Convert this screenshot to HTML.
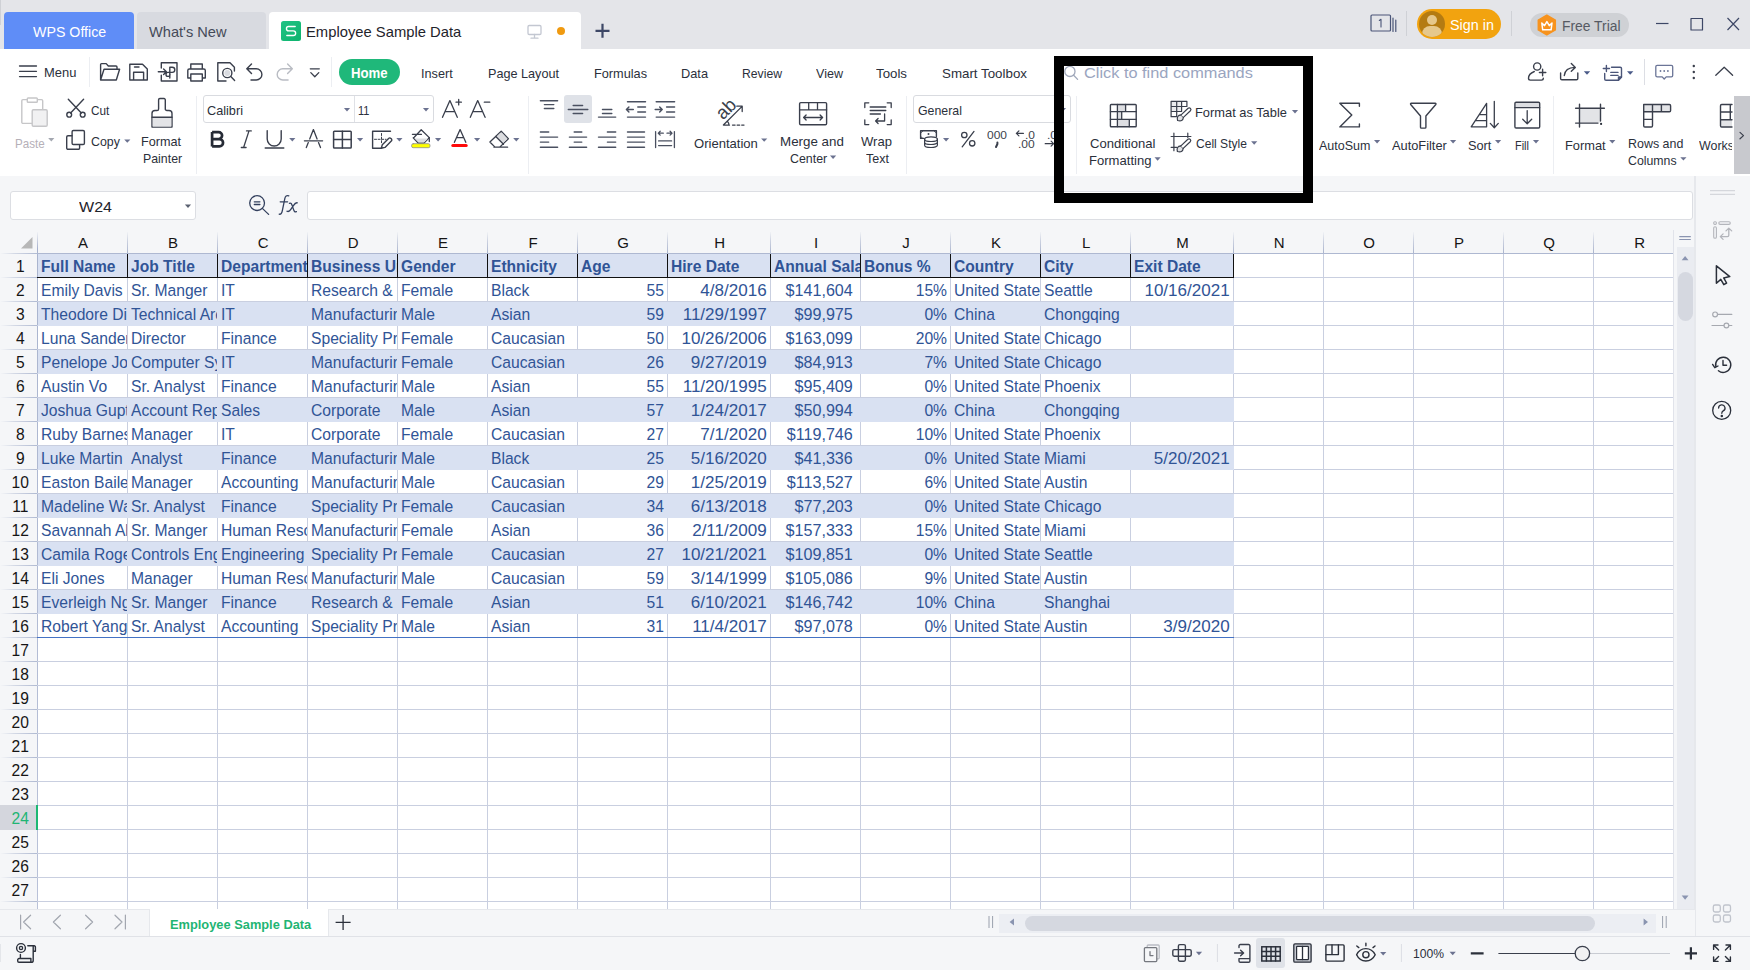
<!DOCTYPE html>
<html><head><meta charset="utf-8"><title>WPS</title>
<style>
*{box-sizing:border-box;margin:0;padding:0}
html,body{width:1750px;height:970px;overflow:hidden;background:#fff}
body{font-family:"Liberation Sans",sans-serif;color:#2b303b;font-size:13px}
#app{position:relative;width:1750px;height:970px;overflow:hidden;background:#fff}
.abs{position:absolute}
svg{position:absolute;overflow:visible}
.t{position:absolute;white-space:nowrap;line-height:1}
/* title bar */
#title{position:absolute;left:0;top:0;width:1750px;height:49px;background:#e4e5e9}
.tab{position:absolute;top:12px;height:37px;border-radius:4px 4px 0 0}
/* ribbon */
#menurow{position:absolute;left:0;top:49px;width:1750px;height:47px;background:#fff}
#ribbon{position:absolute;left:0;top:96px;width:1750px;height:80px;background:#fff}
.sep{position:absolute;width:1px;background:#eceef2}
.box{position:absolute;background:#fff;border:1px solid #d9dbe0;border-radius:3px}
.arr{position:absolute;width:0;height:0;border-left:3.5px solid transparent;border-right:3.5px solid transparent;border-top:4px solid #5a6070}
/* formula area */
#fbar{position:absolute;left:0;top:176px;width:1750px;height:77px;background:#f5f6f8}
/* grid */
#grid{position:absolute;left:0;top:0;width:1673px;height:909px;overflow:hidden;clip-path:inset(232px 0 0 0)}
.ch{position:absolute;top:233px;width:42px;height:20px;line-height:20px;text-align:center;font-size:15px;color:#151515}
.chl{position:absolute;top:231px;width:1px;height:22px;background:linear-gradient(to bottom,rgba(170,180,205,0),rgba(170,180,205,.55) 45%,#aab4cd)}
.rn{position:absolute;left:1.75px;width:37px;height:23px;line-height:25px;text-align:center;font-size:15.6px;color:#151515}
#rowhdr{position:absolute;left:0;top:232px;width:37px;height:677px;background:#f5f6f8}
.rl{position:absolute;left:0;width:37px;height:1px;background:linear-gradient(to right,rgba(176,186,210,0),rgba(176,186,210,.5) 40%,#b0bad2)}
.rn.sel{color:#1fb574;z-index:3}
.selbg{z-index:2;position:absolute;left:0;top:805px;width:36px;height:25px;background:#d4d6dd}
.vl{position:absolute;top:253px;width:1px;height:660px;background:#c9cfe0}
.vl.first{top:231px;height:680px;background:linear-gradient(to bottom,rgba(163,174,203,0),#a3aecb 18px,#a9b4ce 22px,#b9c1d8 100%)}
.hl{position:absolute;left:37px;width:1636px;height:1px;background:#c9cfe0}
.hl.first{background:#aeb8d1}
.band{position:absolute;left:38px;width:1196px;height:24px;background:#d9e1f2}
.c{position:absolute;height:23px;line-height:25px;font-size:15.65px;transform:scaleY(1.06);transform-origin:50% 60%;color:#305496;white-space:nowrap;overflow:hidden;padding-left:3px}
.c.h{font-weight:bold;font-size:15.6px}
.c.r{text-align:right;padding-left:0;padding-right:3px}
.c.sal{padding-right:7px;transform:scale(1.03,1.06);transform-origin:100% 60%}
.c.dt{transform:scale(1.09,1.06);transform-origin:100% 60%}
.hb{position:absolute;top:254px;width:1px;height:24px;background:#111}
.hbb{position:absolute;left:37px;width:1197px;height:1px;background:#111}
.tbb{position:absolute;left:37px;width:1197px;height:1px;background:#4472c4}
.selmark{z-index:3;position:absolute;left:36px;top:805px;width:2px;height:25px;background:#1cb873}
/* bottom */
#sheetbar{position:absolute;left:0;top:909px;width:1695px;height:27px;background:#f5f6f8;border-top:1px solid #e6e8ec}
#status{position:absolute;left:0;top:936px;width:1750px;height:34px;background:#f5f6f8;border-top:1px solid #e0e2e7}
#rpanel{position:absolute;left:1694px;top:176px;width:56px;height:760px;background:#f5f6f8;border-left:2px solid #e6e8ec}
#vscroll{position:absolute;left:1677px;top:247px;width:17px;height:662px;background:#eaecf1}
#annot{position:absolute;left:1054px;top:56px;width:259px;height:147px;border:10px solid #000}
.mt{top:66.5px;font-size:12.9px;color:#2b303b}
#menurow .mt{top:17.5px}

</style></head>
<body>
<div id="app">

<div id="title">
 <div class="abs" style="left:0;top:0;width:1px;height:25px;background:#cfd1d6"></div>
 <div class="tab" style="left:4px;width:130px;background:#5f8df7"></div>
 <div class="t" style="left:32.6px;top:25px;font-size:14.2px;color:#fff;transform:scaleX(1.0019);transform-origin:0 0;">WPS Office</div>
 <div class="tab" style="left:137px;width:129px;background:#d8dae0"></div>
 <div class="t" style="left:149.2px;top:25px;font-size:14.2px;color:#454a58;transform:scaleX(1.0299);transform-origin:0 0;">What's New</div>
 <div class="tab" style="left:269px;width:312px;background:#fff"></div>
 <div class="abs" style="left:281px;top:21px;width:20px;height:20px;background:linear-gradient(135deg,#20c385,#0db36d);border-radius:2.5px"></div>
 <div class="t" style="left:306.4px;top:25px;font-size:14.6px;color:#1f232b;transform:scaleX(1.0129);transform-origin:0 0;">Employee Sample Data</div>
 <div class="abs" style="left:557px;top:27px;width:8px;height:8px;border-radius:4px;background:#f09a10"></div>
 <!-- right side -->
 <div class="abs" style="left:1406px;top:11px;width:1px;height:25px;background:#cfd1d6"></div>
 <div class="abs" style="left:1417px;top:9px;width:84px;height:30px;border-radius:15px;background:#f2a30f"></div>
 <div class="abs" style="left:1419px;top:11px;width:26px;height:26px;border-radius:13px;background:#b47b12;overflow:hidden">
   <div class="abs" style="left:8px;top:4px;width:10px;height:10px;border-radius:5px;background:#e6c88c"></div>
   <div class="abs" style="left:3px;top:15px;width:20px;height:16px;border-radius:9px;background:#e6c88c"></div>
 </div>
 <div class="t" style="left:1450.1px;top:17px;font-size:15.4px;color:#fff;transform:scaleX(0.9349);transform-origin:0 0;">Sign in</div>
 <div class="abs" style="left:1511px;top:11px;width:1px;height:25px;background:#cfd1d6"></div>
 <div class="abs" style="left:1530px;top:13px;width:99px;height:24px;border-radius:12px;background:#cfd1d5"></div>
 <div class="t" style="left:1561.8px;top:19px;font-size:14.2px;color:#565a63;transform:scaleX(0.9763);transform-origin:0 0;">Free Trial</div>
</div>
<div id="menurow">
 <div class="t" style="left:44.3px;top:18px;font-size:12.8px;color:#2b303b;transform:scaleX(1.0120);transform-origin:0 0;">Menu</div>
 <div class="sep" style="left:89px;top:8px;height:30px"></div>
 <div class="sep" style="left:331px;top:8px;height:30px"></div>
 <div class="abs" style="left:339px;top:10px;width:61px;height:26px;border-radius:13px;background:#1fb87a"></div>
 <div class="t" style="left:351.4px;top:18px;font-size:13.8px;color:#fff;font-weight:700;transform:scaleX(0.9545);transform-origin:0 0;">Home</div>
 <div class="t" style="left:421.4px;top:19px;font-size:12.8px;color:#2b303b;transform:scaleX(0.9901);transform-origin:0 0;">Insert</div>
 <div class="t" style="left:488.0px;top:19px;font-size:12.8px;color:#2b303b;transform:scaleX(0.9878);transform-origin:0 0;">Page Layout</div>
 <div class="t" style="left:594.0px;top:19px;font-size:12.8px;color:#2b303b;transform:scaleX(0.9936);transform-origin:0 0;">Formulas</div>
 <div class="t" style="left:681.0px;top:19px;font-size:12.8px;color:#2b303b;transform:scaleX(0.9988);transform-origin:0 0;">Data</div>
 <div class="t" style="left:742.0px;top:19px;font-size:12.8px;color:#2b303b;transform:scaleX(0.9531);transform-origin:0 0;">Review</div>
 <div class="t" style="left:816.0px;top:19px;font-size:12.8px;color:#2b303b;transform:scaleX(0.9813);transform-origin:0 0;">View</div>
 <div class="t" style="left:876.0px;top:19px;font-size:12.8px;color:#2b303b;transform:scaleX(1.0377);transform-origin:0 0;">Tools</div>
 <div class="t" style="left:942.0px;top:19px;font-size:12.8px;color:#2b303b;transform:scaleX(1.0421);transform-origin:0 0;">Smart Toolbox</div>
 <div class="t" style="left:1083.7px;top:16px;font-size:15.4px;color:#9aa5bf;transform:scaleX(1.0610);transform-origin:0 0;">Click to find commands</div>
 <div class="sep" style="left:1644px;top:10px;height:26px;background:#dcdee4"></div>
</div>
<div id="ribbon"></div>
<div id="fbar"></div>
<svg id="topsvg" width="1750" height="100" style="left:0;top:0" fill="none" stroke="#3a3f4c" stroke-width="1.4" stroke-linecap="round" stroke-linejoin="round">
 <!-- S logo -->
 <path d="M295.2 26.5 H288.6 a2.15 2.15 0 0 0 0 4.3 H293.3 a2.35 2.35 0 0 1 0 4.7 H286.8" stroke="#fff" stroke-width="1.35"/>
 <!-- monitor -->
 <g stroke="#c3c7d1" stroke-width="1.3"><rect x="528" y="25.5" width="13" height="9" rx="1.2"/><path d="M534.5 34.5 V38 M531 38.2 H538"/></g>
 <!-- plus -->
 <path d="M595.5 30.8 H609.5 M602.5 23.8 V37.8" stroke="#3d4766" stroke-width="2.2" stroke-linecap="butt"/>
 <!-- "1" pages icon -->
 <g stroke="#4a5578" stroke-width="1.2"><rect x="1371" y="15" width="19.5" height="16" rx="1"/><path d="M1393 18 V31.5 M1395.8 20 V31.5"/><path d="M1379.3 20.5 L1381 19.3 V27" stroke-width="1.1"/></g>
 <!-- crown hexagon -->
 <path d="M1546.8 15.2 L1555.3 20.1 V29.9 L1546.8 34.8 L1538.3 29.9 V20.1 Z" fill="#f7931e" stroke="#f7931e" stroke-width="1.5"/>
 <path d="M1541.8 23 L1544.5 25.6 L1546.9 21.6 L1549.3 25.6 L1552 23 L1551.1 29.8 H1542.7 Z" stroke="#fff" stroke-width="1.5"/>
 <!-- window controls -->
 <g stroke="#3d4766" stroke-width="1.2" stroke-linecap="butt"><path d="M1656 23.5 H1668.5"/><rect x="1691" y="18.5" width="11.5" height="11.5"/><path d="M1727.5 18 L1739 30 M1739 18 L1727.5 30"/></g>
 <!-- hamburger -->
 <path d="M19.5 66 H36.5 M19.5 71.3 H36.5 M19.5 76.6 H36.5" stroke-width="1.3"/>
 <!-- open folder -->
 <path d="M100.6 80 V64.6 a1 1 0 0 1 1-1 H106.2 L108.3 66 H116 a1 1 0 0 1 1 1 V69.2 M100.6 80 L104 69.2 H119.6 L116.3 80 Z"/>
 <!-- save -->
 <path d="M129.8 64.2 H142.5 L147.3 69 V80 H129.8 Z M133.6 80 V72.2 H143.6 V80 M134.5 67 H139"/>
 <!-- export -->
 <path d="M161.3 68 V62.8 H177 V81 H161.3 V75.3 M158.3 71.7 H166.2 M163.6 69 L166.4 71.7 L163.6 74.4 M169.8 78 V67.2 H172.2 a2.6 2.6 0 0 1 0 5.2 H168 a2 2 0 1 0 2 2"/>
 <!-- print -->
 <path d="M190.8 69 V64 H202.3 V69 M190.8 78 H187.8 V70.5 a1.5 1.5 0 0 1 1.5-1.5 H203.8 a1.5 1.5 0 0 1 1.5 1.5 V78 H202.3 M190.8 74 H202.3 V81 H190.8 Z"/>
 <!-- preview -->
 <path d="M226 81 H217.8 V62.8 H230 L234.4 67.2 V71"/>
 <circle cx="227.3" cy="73" r="4.6"/><circle cx="227.3" cy="73" r="3" fill="#d9dbe0" stroke="none"/>
 <path d="M230.8 76.6 L234.6 80.4"/>
 <!-- undo -->
 <path d="M251.5 64 L246.8 68.8 L251.5 73.6 M247.2 68.8 H256.3 a5.6 5.6 0 0 1 0 11.2 H251"/>
 <!-- redo -->
 <path d="M287.6 64 L292.3 68.8 L287.6 73.6 M291.9 68.8 H282.8 a5.6 5.6 0 0 0 0 11.2 H288.1" stroke="#b9bcc3"/>
 <!-- qat dropdown -->
 <path d="M310.3 68.8 H319.3 M310.8 72.6 L314.8 76.8 L318.8 72.6" stroke-width="1.3"/>
 <!-- search magnifier -->
 <g stroke="#a0a8bb" stroke-width="1.3"><circle cx="1069.9" cy="71.4" r="5.1"/><path d="M1073.6 75.2 L1077.6 79.4"/></g>
 <!-- person plus -->
 <circle cx="1537.2" cy="66.5" r="3.6"/>
 <path d="M1534.3 71.5 C1530.5 73 1528.5 76 1528.5 78.3 a1.8 1.8 0 0 0 1.8 1.8 H1541.5 a1.8 1.8 0 0 0 1.8 -1.8 M1542.6 69.3 V75.7 M1539.4 72.5 H1545.8"/>
 <!-- share -->
 <path d="M1560.6 73 V78.4 a1.3 1.3 0 0 0 1.3 1.3 H1576.5 a1.3 1.3 0 0 0 1.3 -1.3 V73 M1564.3 75.5 C1564.8 70.5 1568.5 67.6 1575 67.4 M1571.3 63.6 L1575.3 67.4 L1571.3 71.3"/>
 <path d="M1583.8 71.2 H1590.2 L1587 74.8 Z" fill="#4a5a88" stroke="none"/>
 <!-- note plus -->
 <g stroke="#4a5578"><path d="M1603.3 68.5 H1609.5 M1606.4 65.4 V71.6 M1611.5 67.2 H1620.2 a1.3 1.3 0 0 1 1.3 1.3 V77 L1618.5 80.2 H1606 a1.3 1.3 0 0 1 -1.3 -1.3 V73.5 M1610.8 72.4 H1618 M1610.8 75.4 H1618"/><path d="M1618.5 80 V77 H1621.5 Z" fill="#4a5578"/></g>
 <path d="M1627 71.2 H1633.4 L1630.2 74.8 Z" fill="#4a5a88" stroke="none"/>
 <!-- comment -->
 <g stroke="#6b7597" stroke-width="1.3"><path d="M1657.2 65.3 H1671.3 a1.4 1.4 0 0 1 1.4 1.4 V75.5 a1.4 1.4 0 0 1 -1.4 1.4 H1666.2 L1664.2 79 L1662.2 76.9 H1657.2 a1.4 1.4 0 0 1 -1.4 -1.4 V66.7 a1.4 1.4 0 0 1 1.4 -1.4 Z"/></g>
 <g fill="#6b7597" stroke="none"><circle cx="1660.5" cy="71" r="0.9"/><circle cx="1664.2" cy="71" r="0.9"/><circle cx="1667.9" cy="71" r="0.9"/></g>
 <!-- kebab -->
 <g fill="#3a3f4c" stroke="none"><circle cx="1693.8" cy="66" r="1.2"/><circle cx="1693.8" cy="72" r="1.2"/><circle cx="1693.8" cy="78" r="1.2"/></g>
 <!-- chevron up -->
 <path d="M1715.8 75.3 L1724.2 67.3 L1732.6 75.3" stroke-width="1.3"/>
</svg>


<!-- ===== clipboard group ===== -->
<div class="t" style="left:14.7px;top:138px;font-size:12.8px;color:#b5b0b8;transform:scaleX(0.9073);transform-origin:0 0;">Paste</div>
<div class="t" style="left:90.7px;top:105px;font-size:12.8px;color:#2b303b;transform:scaleX(0.9186);transform-origin:0 0;">Cut</div>
<div class="t" style="left:90.7px;top:136px;font-size:12.8px;color:#2b303b;transform:scaleX(0.9674);transform-origin:0 0;">Copy</div>
<div class="t" style="left:140.7px;top:136px;font-size:12.8px;color:#2b303b;transform:scaleX(0.9869);transform-origin:0 0;">Format</div>
<div class="t" style="left:142.6px;top:153px;font-size:12.8px;color:#2b303b;transform:scaleX(0.9643);transform-origin:0 0;">Painter</div>
<div class="sep" style="left:196px;top:96px;height:78px"></div>
<!-- ===== font group ===== -->
<div class="box" style="left:203px;top:95px;width:231px;height:28px"></div>
<div class="abs" style="left:354px;top:96px;width:1px;height:26px;background:#dfe1e6"></div>
<div class="t" style="left:206.7px;top:105px;font-size:12.8px;color:#2b303b;transform:scaleX(0.9922);transform-origin:0 0;">Calibri</div>
<div class="t" style="left:358.2px;top:105px;font-size:12.8px;color:#2b303b;transform:scaleX(0.8573);transform-origin:0 0;">11</div>
<div class="sep" style="left:528px;top:96px;height:78px"></div>

<!-- ===== alignment group ===== -->
<div class="abs" style="left:564px;top:95px;width:28px;height:28px;border-radius:3px;background:#dfe2e8"></div>
<div class="t" style="left:693.7px;top:138px;font-size:12.8px;color:#2b303b;transform:scaleX(1.0206);transform-origin:0 0;">Orientation</div>
<div class="t" style="left:779.5px;top:136px;font-size:12.8px;color:#2b303b;transform:scaleX(1.0443);transform-origin:0 0;">Merge and</div>
<div class="t" style="left:789.8px;top:153px;font-size:12.8px;color:#2b303b;transform:scaleX(0.9682);transform-origin:0 0;">Center</div>
<div class="t" style="left:860.5px;top:136px;font-size:12.8px;color:#2b303b;transform:scaleX(1.0183);transform-origin:0 0;">Wrap</div>
<div class="t" style="left:866.3px;top:153px;font-size:12.8px;color:#2b303b;transform:scaleX(0.9751);transform-origin:0 0;">Text</div>
<div class="t" style="left:715.8px;top:100.4px;font-size:18.5px;color:#3a3f4c;transform:rotate(-45deg);transform-origin:50% 50%">ab</div>
<div class="sep" style="left:906px;top:96px;height:78px"></div>
<!-- ===== number group ===== -->
<div class="box" style="left:913px;top:95px;width:158px;height:28px"></div>
<div class="t" style="left:917.8px;top:105px;font-size:12.8px;color:#2b303b;transform:scaleX(0.9642);transform-origin:0 0;">General</div>
<div class="t" style="left:987.0px;top:130px;font-size:10.8px;color:#3a3f4c;transform:scaleX(1.1101);transform-origin:0 0;">000</div>
<div class="t" style="left:1025.0px;top:130px;font-size:10.8px;color:#3a3f4c;transform:scaleX(1.1092);transform-origin:0 0;">.0</div>
<div class="t" style="left:1018.0px;top:139px;font-size:10.8px;color:#3a3f4c;transform:scaleX(1.1122);transform-origin:0 0;">.00</div>
<div class="t" style="left:1047.0px;top:130px;font-size:10.8px;color:#3a3f4c;transform:scaleX(1.1092);transform-origin:0 0;">.0</div>
<div class="sep" style="left:1076px;top:96px;height:78px"></div>

<!-- ===== styles group ===== -->
<div class="t" style="left:1089.5px;top:138px;font-size:12.8px;color:#2b303b;transform:scaleX(1.0214);transform-origin:0 0;">Conditional</div>
<div class="t" style="left:1088.5px;top:155px;font-size:12.8px;color:#2b303b;transform:scaleX(1.0217);transform-origin:0 0;">Formatting</div>
<div class="t" style="left:1195.3px;top:107px;font-size:12.8px;color:#2b303b;transform:scaleX(1.0042);transform-origin:0 0;">Format as Table</div>
<div class="t" style="left:1195.6px;top:138px;font-size:12.8px;color:#2b303b;transform:scaleX(0.9415);transform-origin:0 0;">Cell Style</div>
<div class="t" style="left:1319.3px;top:140px;font-size:12.8px;color:#2b303b;transform:scaleX(0.9764);transform-origin:0 0;">AutoSum</div>
<div class="t" style="left:1392.1px;top:140px;font-size:12.8px;color:#2b303b;transform:scaleX(1.0006);transform-origin:0 0;">AutoFilter</div>
<div class="t" style="left:1468.3px;top:140px;font-size:12.8px;color:#2b303b;transform:scaleX(0.9964);transform-origin:0 0;">Sort</div>
<div class="t" style="left:1515.3px;top:140px;font-size:12.8px;color:#2b303b;transform:scaleX(0.8558);transform-origin:0 0;">Fill</div>
<div class="sep" style="left:1553px;top:96px;height:78px"></div>
<div class="t" style="left:1565.4px;top:140px;font-size:12.8px;color:#2b303b;transform:scaleX(1.0017);transform-origin:0 0;">Format</div>
<div class="t" style="left:1627.7px;top:138px;font-size:12.8px;color:#2b303b;transform:scaleX(0.9735);transform-origin:0 0;">Rows and</div>
<div class="t" style="left:1627.7px;top:155px;font-size:12.8px;color:#2b303b;transform:scaleX(0.9624);transform-origin:0 0;">Columns</div>
<div class="abs" style="left:1690px;top:100px;width:42px;height:70px;overflow:hidden">
 <div class="t" style="left:9.1px;top:40px;font-size:12.8px;color:#2b303b;transform:scaleX(0.97);transform-origin:0 0">Worksheet</div>
</div>
<div class="abs" style="left:1734px;top:96px;width:16px;height:78px;background:#c8c9ce"></div>
<!-- ===== formula bar ===== -->
<div class="box" style="left:10px;top:191px;width:186px;height:29px;border-color:#dcdee3"></div>
<div class="t" style="left:78.5px;top:199px;font-size:15.4px;color:#1f232b;transform:scaleX(1.0424);transform-origin:0 0;">W24</div>
<div class="box" style="left:307px;top:191px;width:1386px;height:29px;border-color:#dcdee3"></div>

<svg id="ribsvg" width="1750" height="232" style="left:0;top:0" fill="none" stroke="#3a3f4c" stroke-width="1.4" stroke-linecap="round" stroke-linejoin="round">
 <!-- paste icon (disabled) -->
 <g stroke="#c6c6c8" stroke-width="1.4"><path d="M27.5 99.6 H23 a1.2 1.2 0 0 0 -1.2 1.2 V122.2 a1.2 1.2 0 0 0 1.2 1.2 H32 M37.5 99.6 H41.5 a1.2 1.2 0 0 1 1.2 1.2 V109.4"/><rect x="27.3" y="98" width="10" height="4.2" rx="0.8" fill="#fff"/><rect x="32.2" y="109.8" width="15" height="16.4" rx="1.2" fill="#f1f1f2"/></g>
 <path d="M48.2 138 h6.2 l-3.1 3.4 Z" fill="#a3a7b0" stroke="none"/>
 <!-- scissors -->
 <path d="M68.3 99.2 L81.3 112.9 M83.6 99.2 L70.6 112.9"/><circle cx="69.2" cy="114.7" r="2.4"/><circle cx="82.7" cy="114.7" r="2.4"/>
 <!-- copy -->
 <path d="M72 135.8 H68 a1.3 1.3 0 0 0 -1.3 1.3 V148 a1.3 1.3 0 0 0 1.3 1.3 H78.3 a1.3 1.3 0 0 0 1.3 -1.3 V144.6"/><rect x="72.1" y="130.5" width="12.3" height="14" rx="1.3"/>
 <path d="M124.2 139.4 h6.2 l-3.1 3.4 Z" fill="#6b7290" stroke="none"/>
 <!-- format painter -->
 <path d="M152 127.1 V113.5 a3 3 0 0 1 3 -3 H157 a1.6 1.6 0 0 0 1.6 -1.6 V99.8 a1.3 1.3 0 0 1 1.3 -1.3 H164 a1.3 1.3 0 0 1 1.3 1.3 V108.9 a1.6 1.6 0 0 0 1.6 1.6 H169 a3 3 0 0 1 3 3 V127.1 Z"/><rect x="152.7" y="117.8" width="18.6" height="8.6" fill="#e3e4e7" stroke="none"/><path d="M152 117.3 H172"/>
 <!-- font box arrows -->
 <path d="M343.9 108 h6.2 l-3.1 3.4 Z" fill="#6b7290" stroke="none"/><path d="M422.9 108 h6.2 l-3.1 3.4 Z" fill="#6b7290" stroke="none"/>
 <!-- A+ A- -->
 <path d="M442.5 117.3 L449.9 100.6 L457.3 117.3 M445.3 111.6 H454.5" stroke-width="1.3"/><path d="M456 102.2 H461.4 M458.7 99.5 V104.9" stroke-width="1.3"/>
 <path d="M470.3 117.3 L477.7 100.6 L485.1 117.3 M473.1 111.6 H482.3" stroke-width="1.3"/><path d="M484.3 102.2 H489.8" stroke-width="1.3"/>
 <!-- B -->
 <path d="M212.1 132.1 V146.4 M212.1 132.1 H218.6 a3.5 3.5 0 0 1 0 7 H212.1 M218.6 139.1 H219.4 a3.65 3.65 0 0 1 0 7.3 H212.1" stroke="#262b36" stroke-width="2.7" stroke-linejoin="round" stroke-linecap="butt"/>
 <!-- I -->
 <path d="M246.5 130.9 H251.3 M241.3 147.5 H246.1 M249 130.9 L243.6 147.5" stroke-width="1.3"/>
 <!-- U -->
 <path d="M267.2 130.6 V139 a7 7 0 0 0 14 0 V130.6 M265.2 148 H283.8" stroke-width="1.4"/>
 <path d="M289.2 138.1 h6.2 l-3.1 3.4 Z" fill="#6b7290" stroke="none"/>
 <!-- strike A -->
 <path d="M313.4 129.6 L309.7 139 M313.4 129.6 L317.1 139 M308.3 142.6 L306.3 147.6 M318.5 142.6 L320.5 147.6 M304.4 140.8 H322.6" stroke-width="1.3"/>
 <!-- borders -->
 <rect x="333.6" y="131.2" width="17.6" height="16.8" rx="0.8" stroke-width="1.5"/><path d="M342.4 131.2 V148 M333.6 139.6 H351.2" stroke-width="1.5"/>
 <path d="M357 138.1 h6.2 l-3.1 3.4 Z" fill="#6b7290" stroke="none"/>
 <!-- draw border -->
 <path d="M372.6 148.2 V131.3 H390.5 M372.6 148.2 H381"/><path d="M381.5 133.5 V144 M374.5 139.3 H386" stroke-width="1" stroke-dasharray="2 1.6"/><path d="M381.3 148.2 L382.3 144.7 L388.6 138.4 a1.6 1.6 0 0 1 2.3 0 l0.4 0.4 a1.6 1.6 0 0 1 0 2.3 L385 147.4 Z" fill="#fff"/>
 <path d="M396.3 138.1 h6.2 l-3.1 3.4 Z" fill="#6b7290" stroke="none"/>
 <!-- fill bucket -->
 <path d="M414.2 137.2 L421.2 129.8 L429.3 137.6 L424 143 H418.2 L413.2 137.9 Z M412.4 134.3 H421.5" stroke-width="1.3"/><path d="M414.8 138.6 H428 L424 142.6 H418.5 Z" fill="#dcdde0" stroke="none"/><path d="M429.3 137.6 V141.5" stroke-width="1.3"/>
 <rect x="411.6" y="143.7" width="18.4" height="4" rx="1.6" fill="#ffff00" stroke="#8a8d8a" stroke-width="0.8"/>
 <path d="M435 138.1 h6.2 l-3.1 3.4 Z" fill="#6b7290" stroke="none"/>
 <!-- font color -->
 <path d="M454.4 142.3 L460.1 129.6 L465.8 142.3 M456.6 137.6 H463.6" stroke-width="1.3"/><path d="M452.8 145.5 H466.2" stroke="#ff0a0a" stroke-width="3"/>
 <path d="M474 138.1 h6.2 l-3.1 3.4 Z" fill="#6b7290" stroke="none"/>
 <!-- eraser -->
 <path d="M489.9 142 L501.2 131.2 L508.4 138.7 L499.7 147.1 H495 Z M494 147.2 H507.6" stroke-width="1.3"/><path d="M496.6 136.4 L501.2 132 L507.5 138.7 L503 143 Z" fill="#dcdde0" stroke="none"/><path d="M495.8 136.5 L503.5 144.2" stroke-width="1.3"/>
 <path d="M513.2 138.1 h6.2 l-3.1 3.4 Z" fill="#6b7290" stroke="none"/>
<g stroke="#4a5060" stroke-width="1.45"><path d="M540.4 100.8 H557.6 M544.4 104.6 H553.8 M544.4 108.4 H553.8 "/><path d="M573.2 105.4 H582.6 M568.3 109.5 H587.8 M573.2 113.5 H582.6 "/><path d="M602.5 109.5 H611.8 M602.5 113.5 H611.8 M598.5 117.1 H615.7 "/><path d="M627.5 101.8 H645.5 M637.8 107 H645.5 M637.8 111.9 H645.5 M627.5 117.1 H645.5 M626.4 109.5 H633.3 M628.9 107 L626.4 109.5 L628.9 112"/><path d="M656.2 101.8 H674.6 M666.6 107 H674.6 M666.6 111.9 H674.6 M656.2 117.1 H674.6 M655.2 109.5 H662.2 M659.7 107 L662.2 109.5 L659.7 112"/><path d="M540.4 132 H548.7 M540.4 137.1 H557.6 M540.4 142.1 H548.7 M540.4 147.2 H557.6 "/><path d="M574.2 132 H581.8 M569.4 137.1 H586.6 M574.2 142.1 H581.8 M569.4 147.2 H586.6 "/><path d="M607.4 132 H615.7 M598.5 137.1 H615.7 M607.4 142.1 H615.7 M598.5 147.2 H615.7 "/><path d="M627.5 132 H644.5 M627.5 137.1 H644.5 M627.5 142.1 H644.5 M627.5 147.2 H644.5 "/><path d="M655.6 131.6 V147.6 M674.4 131.6 V147.6 M658.6 140.9 H671.6 M658.6 145.6 H671.6 M658.3 133.2 H663.3 M660.2 131.3 L658.3 133.2 L660.2 135.1 M667 133.2 H672 M670.1 131.3 L672 133.2 L670.1 135.1" stroke-width="1.3"/></g>
 <!-- orientation -->
 <path d="M723.4 125 L741.8 106.6 M736.8 106.2 H742.2 V111.6 M723.4 125.1 H729.5 M727.3 121.2 a5.5 5.5 0 0 1 1.7 3.9" stroke-width="1.3"/><path d="M732.5 125.1 H744" stroke-width="1.3" stroke-dasharray="2.6 2"/>
 <path d="M761.1 138.4 h6.2 l-3.1 3.4 Z" fill="#6b7290" stroke="none"/>
 <!-- merge and center -->
 <rect x="799.6" y="102.6" width="27" height="22.2" rx="1.2"/><path d="M799.6 109.8 H826.6 M808.7 102.6 V109.8 M817.5 102.6 V109.8 M803.6 117.5 H822.6 M806.1 115 L803.6 117.5 L806.1 120 M820.1 115 L822.6 117.5 L820.1 120" stroke-width="1.3"/>
 <path d="M830 155.5 h6.2 l-3.1 3.4 Z" fill="#6b7290" stroke="none"/>
 <!-- wrap text -->
 <path d="M868.8 102.8 H864.8 V107.6 M887.2 102.8 H891.2 V107.6 M864.8 119.8 V124.6 H868.8 M891.2 119.8 V124.6 H887.2 M870.2 107 H885.8 M870.2 110.5 H885.8 M870.2 114 H880.4 M884.6 114 V121 H875.6 M878.1 118.5 L875.6 121 L878.1 123.5" stroke-width="1.3"/>
 <!-- number box arrow -->
 <path d="M1059.9 108 h6.2 l-3.1 3.4 Z" fill="#6b7290" stroke="none"/>
 <!-- currency -->
 <path d="M924 138.4 H920.6 V130.8 H936.4 V136.6" stroke-width="1.4"/><path d="M920.8 132.8 L922.8 131 M936.2 132.8 L934.2 131 M920.8 136.6 L922.6 138.2" stroke-width="1"/><circle cx="928.5" cy="134" r="1" fill="#3a3f4c" stroke="none"/>
 <ellipse cx="931" cy="139.2" rx="6.4" ry="2.3" fill="#fff" stroke-width="1.2"/><path d="M924.6 139.2 V145.2 a6.4 2.3 0 0 0 12.8 0 V139.2 M924.6 142.2 a6.4 2.3 0 0 0 12.8 0" stroke-width="1.2"/>
 <path d="M943 138.1 h6.2 l-3.1 3.4 Z" fill="#6b7290" stroke="none"/>
 <!-- percent -->
 <circle cx="964.3" cy="135" r="2.7" stroke-width="1.3"/><circle cx="972.2" cy="143.3" r="2.7" stroke-width="1.3"/><path d="M974 131.4 L962.2 146.8" stroke-width="1.3"/>
 <!-- 000 comma -->
 <path d="M997.4 142.4 V144 L996 147" stroke-width="2"/>
 <!-- decimal arrows -->
 <path d="M1016.4 133.4 H1023.4 M1018.9 130.9 L1016.4 133.4 L1018.9 135.9" stroke-width="1.2"/>
 <path d="M1045.2 143.7 H1053.6 M1051.1 141.2 L1053.6 143.7 L1051.1 146.2" stroke-width="1.2"/>

 <!-- conditional formatting -->
 <path d="M1117.5 104.9 H1125.6 V111.7 H1117.5 Z M1117.5 111.7 H1121.7 V119.4 H1117.5 Z M1117.5 119.4 H1129.3 V126.3 H1117.5 Z" fill="#dddee2" stroke="none"/>
 <rect x="1110.4" y="104.5" width="25.8" height="22.2" rx="0.8"/><path d="M1110.4 111.7 H1136.2 M1110.4 119.4 H1136.2 M1117.4 104.5 V126.7 M1125.6 104.5 V111.7 M1121.7 111.7 V119.4 M1129.3 119.4 V126.7" stroke-width="1.3"/>
 <path d="M1154.5 157.3 h6.2 l-3.1 3.4 Z" fill="#6b7290" stroke="none"/>
 <!-- format as table -->
 <rect x="1171.1" y="101.3" width="10.5" height="10.2" fill="#ebecee" stroke="none"/>
 <path d="M1171.1 101.3 H1186.9 V106.5 H1171.1 M1171.1 101.3 V116.7 H1176.7 V101.3 M1181.6 101.3 V111.5 H1171.1" stroke-width="1.2"/>
 <path d="M1177.6 120.5 Q1182.78 122.21 1183.42 117.36 L1181.1 114.88 Q1176.2 115.23 1177.6 120.5 Z" fill="#e1e2e5" stroke-width="1.2"/><path d="M1183.42 117.36 L1190.41 110.78 A1.7 1.7 0 0 0 1188.09 108.3 L1181.1 114.88" fill="#fff" stroke-width="1.2"/>
 <path d="M1291.9 110 h6.2 l-3.1 3.4 Z" fill="#6b7290" stroke="none"/>
 <!-- cell style -->
 <path d="M1171.1 136.5 H1190.9 M1187.8 133.2 V137.6 M1173.9 133.2 V150.7 M1171.1 147.3 H1176.7" stroke-width="1.2"/>
 <g transform="translate(-0.2,31)"><path d="M1177.6 120.5 Q1182.78 122.21 1183.42 117.36 L1181.1 114.88 Q1176.2 115.23 1177.6 120.5 Z" fill="#e1e2e5" stroke-width="1.2"/><path d="M1183.42 117.36 L1190.41 110.78 A1.7 1.7 0 0 0 1188.09 108.3 L1181.1 114.88" fill="#fff" stroke-width="1.2"/></g>
 <path d="M1251.1 141.3 h6.2 l-3.1 3.4 Z" fill="#6b7290" stroke="none"/>
 <!-- autosum -->
 <path d="M1359.4 106.2 V103.2 H1339.8 L1351.8 115 L1339.8 126.9 H1359.4 V123.9" stroke-width="1.4"/>
 <path d="M1374 140 h6.2 l-3.1 3.4 Z" fill="#6b7290" stroke="none"/>
 <!-- autofilter -->
 <path d="M1411.3 103.2 H1435.2 a0.8 0.8 0 0 1 0.6 1.3 L1425.9 116 V127.2 a0.9 0.9 0 0 1 -0.9 0.9 H1421.4 a0.9 0.9 0 0 1 -0.9 -0.9 V116 L1410.7 104.5 a0.8 0.8 0 0 1 0.6 -1.3 Z" stroke-width="1.4"/>
 <path d="M1450 140 h6.2 l-3.1 3.4 Z" fill="#6b7290" stroke="none"/>
 <!-- sort -->
 <path d="M1486.6 103.4 V126.8 H1471.2 L1486.6 103.4 M1479.3 114.6 H1486.6 M1475.3 120.7 H1486.6" stroke-width="1.3"/><path d="M1494.3 101.3 V127.6 M1490.3 123.4 L1494.3 127.8 L1498.3 123.4" stroke-width="1.3"/>
 <path d="M1495 140 h6.2 l-3.1 3.4 Z" fill="#6b7290" stroke="none"/>
 <!-- fill -->
 <rect x="1515.2" y="102.5" width="24.2" height="5" fill="#dddee2" stroke="none"/>
 <rect x="1514.9" y="102.2" width="24.8" height="25.8" rx="1.2"/><path d="M1514.9 107.6 H1539.7 M1527.2 110.6 V123.6 M1522.7 119.3 L1527.2 123.8 L1531.7 119.3" stroke-width="1.3"/>
 <path d="M1532.9 140 h6.2 l-3.1 3.4 Z" fill="#6b7290" stroke="none"/>
 <!-- format -->
 <rect x="1580.2" y="109" width="19.8" height="13.6" fill="#e3e4e7" stroke="none"/>
 <path d="M1575.6 108.3 H1604.4 M1575.6 123.1 H1598 M1579.5 104.3 V127 M1600.5 104.3 V121" stroke-width="1.4"/><circle cx="1601.1" cy="123.9" r="1.1" fill="#2b303b" stroke="none"/>
 <path d="M1609.2 140 h6.2 l-3.1 3.4 Z" fill="#6b7290" stroke="none"/>
 <!-- rows and columns -->
 <rect x="1644" y="104.8" width="26.2" height="6.6" fill="#e3e4e7" stroke="none"/>
 <path d="M1643.7 104.5 H1669.4 a1.2 1.2 0 0 1 1.2 1.2 V110.5 a1.2 1.2 0 0 1 -1.2 1.2 H1652.5 V125.8 a1.2 1.2 0 0 1 -1.2 1.2 H1644.9 a1.2 1.2 0 0 1 -1.2 -1.2 Z M1643.7 111.7 H1652.5 V104.5 M1661.4 104.5 V111.7 M1643.7 119.4 H1652.5" stroke-width="1.4"/>
 <path d="M1680.3 157.2 h6.2 l-3.1 3.4 Z" fill="#6b7290" stroke="none"/>
 <!-- worksheet (clipped) -->
 <rect x="1721" y="120" width="11" height="6.8" fill="#e3e4e7" stroke="none"/>
 <path d="M1732 104.5 H1721.7 a1.2 1.2 0 0 0 -1.2 1.2 V125.8 a1.2 1.2 0 0 0 1.2 1.2 H1732 M1720.5 112 H1732 M1720.5 119.7 H1732 M1730.3 104.5 V119.7" stroke-width="1.4"/>
 <path d="M1740 132.4 L1743.5 135.6 L1740 138.8" stroke-width="1.2"/>
 <!-- formula bar icons -->
 <path d="M184.9 204.5 h6.2 l-3.1 3.4 Z" fill="#5a6070" stroke="none"/>
 <g stroke="#33405e"><circle cx="257.1" cy="203.1" r="7.4" stroke-width="1.3"/><path d="M262.6 208.6 L268.6 214.4 M254.3 201.8 H259.9 M254.3 204.5 H259.9" stroke-width="1.3"/>
 <path d="M288.8 195.8 C286.6 195 285.3 196 284.8 198.6 L282.4 210.4 C281.9 213.2 280.8 214.5 279.2 214.2 M280.2 201.8 H287.6" stroke-width="1.3"/>
 <path d="M289.4 203.3 C291 202.6 291.6 203.6 292.2 205.6 L293.6 209.6 C294.2 211.6 295 212.3 296.4 211.6 M297.3 202.8 C295.8 202.4 294.8 203.4 293.4 205.6 L291 209.2 C289.6 211.4 288.4 212 287 211.2" stroke-width="1.3"/></g>
</svg>
<div id="grid">
<div id="rowhdr"></div>
<svg width="12" height="12" style="left:20.5px;top:236.5px"><path d="M11.5 0 V11.5 H0 Z" fill="#b7b7b7"/></svg>
<div class="ch" style="left:62.1px">A</div>
<div class="ch" style="left:152.1px">B</div>
<div class="chl" style="left:127px"></div>
<div class="ch" style="left:242.1px">C</div>
<div class="chl" style="left:217px"></div>
<div class="ch" style="left:332.1px">D</div>
<div class="chl" style="left:307px"></div>
<div class="ch" style="left:422.1px">E</div>
<div class="chl" style="left:397px"></div>
<div class="ch" style="left:512.1px">F</div>
<div class="chl" style="left:487px"></div>
<div class="ch" style="left:602.1px">G</div>
<div class="chl" style="left:577px"></div>
<div class="ch" style="left:698.6px">H</div>
<div class="chl" style="left:667px"></div>
<div class="ch" style="left:795.1px">I</div>
<div class="chl" style="left:770px"></div>
<div class="ch" style="left:885.1px">J</div>
<div class="chl" style="left:860px"></div>
<div class="ch" style="left:975.1px">K</div>
<div class="chl" style="left:950px"></div>
<div class="ch" style="left:1065.1px">L</div>
<div class="chl" style="left:1040px"></div>
<div class="ch" style="left:1161.6px">M</div>
<div class="chl" style="left:1130px"></div>
<div class="ch" style="left:1258.1px">N</div>
<div class="chl" style="left:1233px"></div>
<div class="ch" style="left:1348.1px">O</div>
<div class="chl" style="left:1323px"></div>
<div class="ch" style="left:1438.1px">P</div>
<div class="chl" style="left:1413px"></div>
<div class="ch" style="left:1528.1px">Q</div>
<div class="chl" style="left:1503px"></div>
<div class="ch" style="left:1618.6px">R</div>
<div class="chl" style="left:1593px"></div>
<div class="selbg"></div>
<div class="rn" style="top:254px">1</div>
<div class="rn" style="top:278px">2</div>
<div class="rn" style="top:302px">3</div>
<div class="rn" style="top:326px">4</div>
<div class="rn" style="top:350px">5</div>
<div class="rn" style="top:374px">6</div>
<div class="rn" style="top:398px">7</div>
<div class="rn" style="top:422px">8</div>
<div class="rn" style="top:446px">9</div>
<div class="rn" style="top:470px">10</div>
<div class="rn" style="top:494px">11</div>
<div class="rn" style="top:518px">12</div>
<div class="rn" style="top:542px">13</div>
<div class="rn" style="top:566px">14</div>
<div class="rn" style="top:590px">15</div>
<div class="rn" style="top:614px">16</div>
<div class="rn" style="top:638px">17</div>
<div class="rn" style="top:662px">18</div>
<div class="rn" style="top:686px">19</div>
<div class="rn" style="top:710px">20</div>
<div class="rn" style="top:734px">21</div>
<div class="rn" style="top:758px">22</div>
<div class="rn" style="top:782px">23</div>
<div class="rn sel" style="top:806px">24</div>
<div class="rn" style="top:830px">25</div>
<div class="rn" style="top:854px">26</div>
<div class="rn" style="top:878px">27</div>
<div class="vl first" style="left:37px"></div>
<div class="vl" style="left:127px"></div>
<div class="vl" style="left:217px"></div>
<div class="vl" style="left:307px"></div>
<div class="vl" style="left:397px"></div>
<div class="vl" style="left:487px"></div>
<div class="vl" style="left:577px"></div>
<div class="vl" style="left:667px"></div>
<div class="vl" style="left:770px"></div>
<div class="vl" style="left:860px"></div>
<div class="vl" style="left:950px"></div>
<div class="vl" style="left:1040px"></div>
<div class="vl" style="left:1130px"></div>
<div class="vl" style="left:1233px"></div>
<div class="vl" style="left:1323px"></div>
<div class="vl" style="left:1413px"></div>
<div class="vl" style="left:1503px"></div>
<div class="vl" style="left:1593px"></div>
<div class="hl first" style="top:253px"></div>
<div class="rl" style="top:253px"></div>
<div class="hl" style="top:277px"></div>
<div class="rl" style="top:277px"></div>
<div class="hl" style="top:301px"></div>
<div class="rl" style="top:301px"></div>
<div class="hl" style="top:325px"></div>
<div class="rl" style="top:325px"></div>
<div class="hl" style="top:349px"></div>
<div class="rl" style="top:349px"></div>
<div class="hl" style="top:373px"></div>
<div class="rl" style="top:373px"></div>
<div class="hl" style="top:397px"></div>
<div class="rl" style="top:397px"></div>
<div class="hl" style="top:421px"></div>
<div class="rl" style="top:421px"></div>
<div class="hl" style="top:445px"></div>
<div class="rl" style="top:445px"></div>
<div class="hl" style="top:469px"></div>
<div class="rl" style="top:469px"></div>
<div class="hl" style="top:493px"></div>
<div class="rl" style="top:493px"></div>
<div class="hl" style="top:517px"></div>
<div class="rl" style="top:517px"></div>
<div class="hl" style="top:541px"></div>
<div class="rl" style="top:541px"></div>
<div class="hl" style="top:565px"></div>
<div class="rl" style="top:565px"></div>
<div class="hl" style="top:589px"></div>
<div class="rl" style="top:589px"></div>
<div class="hl" style="top:613px"></div>
<div class="rl" style="top:613px"></div>
<div class="hl" style="top:637px"></div>
<div class="rl" style="top:637px"></div>
<div class="hl" style="top:661px"></div>
<div class="rl" style="top:661px"></div>
<div class="hl" style="top:685px"></div>
<div class="rl" style="top:685px"></div>
<div class="hl" style="top:709px"></div>
<div class="rl" style="top:709px"></div>
<div class="hl" style="top:733px"></div>
<div class="rl" style="top:733px"></div>
<div class="hl" style="top:757px"></div>
<div class="rl" style="top:757px"></div>
<div class="hl" style="top:781px"></div>
<div class="rl" style="top:781px"></div>
<div class="hl" style="top:805px"></div>
<div class="rl" style="top:805px"></div>
<div class="hl" style="top:829px"></div>
<div class="rl" style="top:829px"></div>
<div class="hl" style="top:853px"></div>
<div class="rl" style="top:853px"></div>
<div class="hl" style="top:877px"></div>
<div class="rl" style="top:877px"></div>
<div class="hl" style="top:901px"></div>
<div class="rl" style="top:901px"></div>
<div class="band" style="top:254px"></div>
<div class="band" style="top:302px"></div>
<div class="band" style="top:350px"></div>
<div class="band" style="top:398px"></div>
<div class="band" style="top:446px"></div>
<div class="band" style="top:494px"></div>
<div class="band" style="top:542px"></div>
<div class="band" style="top:590px"></div>
<div class="c h" style="left:38px;top:254px;width:89px">Full Name</div>
<div class="c h" style="left:128px;top:254px;width:89px">Job Title</div>
<div class="c h" style="left:218px;top:254px;width:89px">Department</div>
<div class="c h" style="left:308px;top:254px;width:89px">Business Unit</div>
<div class="c h" style="left:398px;top:254px;width:89px">Gender</div>
<div class="c h" style="left:488px;top:254px;width:89px">Ethnicity</div>
<div class="c h" style="left:578px;top:254px;width:89px">Age</div>
<div class="c h" style="left:668px;top:254px;width:102px">Hire Date</div>
<div class="c h" style="left:771px;top:254px;width:89px">Annual Salary</div>
<div class="c h" style="left:861px;top:254px;width:89px">Bonus %</div>
<div class="c h" style="left:951px;top:254px;width:89px">Country</div>
<div class="c h" style="left:1041px;top:254px;width:89px">City</div>
<div class="c h" style="left:1131px;top:254px;width:102px">Exit Date</div>
<div class="c" style="left:38px;top:278px;width:89px">Emily Davis</div>
<div class="c" style="left:128px;top:278px;width:89px">Sr. Manger</div>
<div class="c" style="left:218px;top:278px;width:89px">IT</div>
<div class="c" style="left:308px;top:278px;width:89px">Research &amp; Development</div>
<div class="c" style="left:398px;top:278px;width:89px">Female</div>
<div class="c" style="left:488px;top:278px;width:89px">Black</div>
<div class="c r" style="left:578px;top:278px;width:89px">55</div>
<div class="c r dt" style="left:668px;top:278px;width:102px">4/8/2016</div>
<div class="c r sal" style="left:771px;top:278px;width:89px">$141,604</div>
<div class="c r" style="left:861px;top:278px;width:89px">15%</div>
<div class="c" style="left:951px;top:278px;width:89px">United States</div>
<div class="c" style="left:1041px;top:278px;width:89px">Seattle</div>
<div class="c r dt" style="left:1131px;top:278px;width:102px">10/16/2021</div>
<div class="c" style="left:38px;top:302px;width:89px">Theodore Dinh</div>
<div class="c" style="left:128px;top:302px;width:89px">Technical Architect</div>
<div class="c" style="left:218px;top:302px;width:89px">IT</div>
<div class="c" style="left:308px;top:302px;width:89px">Manufacturing</div>
<div class="c" style="left:398px;top:302px;width:89px">Male</div>
<div class="c" style="left:488px;top:302px;width:89px">Asian</div>
<div class="c r" style="left:578px;top:302px;width:89px">59</div>
<div class="c r dt" style="left:668px;top:302px;width:102px">11/29/1997</div>
<div class="c r sal" style="left:771px;top:302px;width:89px">$99,975</div>
<div class="c r" style="left:861px;top:302px;width:89px">0%</div>
<div class="c" style="left:951px;top:302px;width:89px">China</div>
<div class="c" style="left:1041px;top:302px;width:89px">Chongqing</div>
<div class="c" style="left:38px;top:326px;width:89px">Luna Sanders</div>
<div class="c" style="left:128px;top:326px;width:89px">Director</div>
<div class="c" style="left:218px;top:326px;width:89px">Finance</div>
<div class="c" style="left:308px;top:326px;width:89px">Speciality Products</div>
<div class="c" style="left:398px;top:326px;width:89px">Female</div>
<div class="c" style="left:488px;top:326px;width:89px">Caucasian</div>
<div class="c r" style="left:578px;top:326px;width:89px">50</div>
<div class="c r dt" style="left:668px;top:326px;width:102px">10/26/2006</div>
<div class="c r sal" style="left:771px;top:326px;width:89px">$163,099</div>
<div class="c r" style="left:861px;top:326px;width:89px">20%</div>
<div class="c" style="left:951px;top:326px;width:89px">United States</div>
<div class="c" style="left:1041px;top:326px;width:89px">Chicago</div>
<div class="c" style="left:38px;top:350px;width:89px">Penelope Jordan</div>
<div class="c" style="left:128px;top:350px;width:89px">Computer Systems Manager</div>
<div class="c" style="left:218px;top:350px;width:89px">IT</div>
<div class="c" style="left:308px;top:350px;width:89px">Manufacturing</div>
<div class="c" style="left:398px;top:350px;width:89px">Female</div>
<div class="c" style="left:488px;top:350px;width:89px">Caucasian</div>
<div class="c r" style="left:578px;top:350px;width:89px">26</div>
<div class="c r dt" style="left:668px;top:350px;width:102px">9/27/2019</div>
<div class="c r sal" style="left:771px;top:350px;width:89px">$84,913</div>
<div class="c r" style="left:861px;top:350px;width:89px">7%</div>
<div class="c" style="left:951px;top:350px;width:89px">United States</div>
<div class="c" style="left:1041px;top:350px;width:89px">Chicago</div>
<div class="c" style="left:38px;top:374px;width:89px">Austin Vo</div>
<div class="c" style="left:128px;top:374px;width:89px">Sr. Analyst</div>
<div class="c" style="left:218px;top:374px;width:89px">Finance</div>
<div class="c" style="left:308px;top:374px;width:89px">Manufacturing</div>
<div class="c" style="left:398px;top:374px;width:89px">Male</div>
<div class="c" style="left:488px;top:374px;width:89px">Asian</div>
<div class="c r" style="left:578px;top:374px;width:89px">55</div>
<div class="c r dt" style="left:668px;top:374px;width:102px">11/20/1995</div>
<div class="c r sal" style="left:771px;top:374px;width:89px">$95,409</div>
<div class="c r" style="left:861px;top:374px;width:89px">0%</div>
<div class="c" style="left:951px;top:374px;width:89px">United States</div>
<div class="c" style="left:1041px;top:374px;width:89px">Phoenix</div>
<div class="c" style="left:38px;top:398px;width:89px">Joshua Gupta</div>
<div class="c" style="left:128px;top:398px;width:89px">Account Representative</div>
<div class="c" style="left:218px;top:398px;width:89px">Sales</div>
<div class="c" style="left:308px;top:398px;width:89px">Corporate</div>
<div class="c" style="left:398px;top:398px;width:89px">Male</div>
<div class="c" style="left:488px;top:398px;width:89px">Asian</div>
<div class="c r" style="left:578px;top:398px;width:89px">57</div>
<div class="c r dt" style="left:668px;top:398px;width:102px">1/24/2017</div>
<div class="c r sal" style="left:771px;top:398px;width:89px">$50,994</div>
<div class="c r" style="left:861px;top:398px;width:89px">0%</div>
<div class="c" style="left:951px;top:398px;width:89px">China</div>
<div class="c" style="left:1041px;top:398px;width:89px">Chongqing</div>
<div class="c" style="left:38px;top:422px;width:89px">Ruby Barnes</div>
<div class="c" style="left:128px;top:422px;width:89px">Manager</div>
<div class="c" style="left:218px;top:422px;width:89px">IT</div>
<div class="c" style="left:308px;top:422px;width:89px">Corporate</div>
<div class="c" style="left:398px;top:422px;width:89px">Female</div>
<div class="c" style="left:488px;top:422px;width:89px">Caucasian</div>
<div class="c r" style="left:578px;top:422px;width:89px">27</div>
<div class="c r dt" style="left:668px;top:422px;width:102px">7/1/2020</div>
<div class="c r sal" style="left:771px;top:422px;width:89px">$119,746</div>
<div class="c r" style="left:861px;top:422px;width:89px">10%</div>
<div class="c" style="left:951px;top:422px;width:89px">United States</div>
<div class="c" style="left:1041px;top:422px;width:89px">Phoenix</div>
<div class="c" style="left:38px;top:446px;width:89px">Luke Martin</div>
<div class="c" style="left:128px;top:446px;width:89px">Analyst</div>
<div class="c" style="left:218px;top:446px;width:89px">Finance</div>
<div class="c" style="left:308px;top:446px;width:89px">Manufacturing</div>
<div class="c" style="left:398px;top:446px;width:89px">Male</div>
<div class="c" style="left:488px;top:446px;width:89px">Black</div>
<div class="c r" style="left:578px;top:446px;width:89px">25</div>
<div class="c r dt" style="left:668px;top:446px;width:102px">5/16/2020</div>
<div class="c r sal" style="left:771px;top:446px;width:89px">$41,336</div>
<div class="c r" style="left:861px;top:446px;width:89px">0%</div>
<div class="c" style="left:951px;top:446px;width:89px">United States</div>
<div class="c" style="left:1041px;top:446px;width:89px">Miami</div>
<div class="c r dt" style="left:1131px;top:446px;width:102px">5/20/2021</div>
<div class="c" style="left:38px;top:470px;width:89px">Easton Bailey</div>
<div class="c" style="left:128px;top:470px;width:89px">Manager</div>
<div class="c" style="left:218px;top:470px;width:89px">Accounting</div>
<div class="c" style="left:308px;top:470px;width:89px">Manufacturing</div>
<div class="c" style="left:398px;top:470px;width:89px">Male</div>
<div class="c" style="left:488px;top:470px;width:89px">Caucasian</div>
<div class="c r" style="left:578px;top:470px;width:89px">29</div>
<div class="c r dt" style="left:668px;top:470px;width:102px">1/25/2019</div>
<div class="c r sal" style="left:771px;top:470px;width:89px">$113,527</div>
<div class="c r" style="left:861px;top:470px;width:89px">6%</div>
<div class="c" style="left:951px;top:470px;width:89px">United States</div>
<div class="c" style="left:1041px;top:470px;width:89px">Austin</div>
<div class="c" style="left:38px;top:494px;width:89px">Madeline Walker</div>
<div class="c" style="left:128px;top:494px;width:89px">Sr. Analyst</div>
<div class="c" style="left:218px;top:494px;width:89px">Finance</div>
<div class="c" style="left:308px;top:494px;width:89px">Speciality Products</div>
<div class="c" style="left:398px;top:494px;width:89px">Female</div>
<div class="c" style="left:488px;top:494px;width:89px">Caucasian</div>
<div class="c r" style="left:578px;top:494px;width:89px">34</div>
<div class="c r dt" style="left:668px;top:494px;width:102px">6/13/2018</div>
<div class="c r sal" style="left:771px;top:494px;width:89px">$77,203</div>
<div class="c r" style="left:861px;top:494px;width:89px">0%</div>
<div class="c" style="left:951px;top:494px;width:89px">United States</div>
<div class="c" style="left:1041px;top:494px;width:89px">Chicago</div>
<div class="c" style="left:38px;top:518px;width:89px">Savannah Ali</div>
<div class="c" style="left:128px;top:518px;width:89px">Sr. Manger</div>
<div class="c" style="left:218px;top:518px;width:89px">Human Resources</div>
<div class="c" style="left:308px;top:518px;width:89px">Manufacturing</div>
<div class="c" style="left:398px;top:518px;width:89px">Female</div>
<div class="c" style="left:488px;top:518px;width:89px">Asian</div>
<div class="c r" style="left:578px;top:518px;width:89px">36</div>
<div class="c r dt" style="left:668px;top:518px;width:102px">2/11/2009</div>
<div class="c r sal" style="left:771px;top:518px;width:89px">$157,333</div>
<div class="c r" style="left:861px;top:518px;width:89px">15%</div>
<div class="c" style="left:951px;top:518px;width:89px">United States</div>
<div class="c" style="left:1041px;top:518px;width:89px">Miami</div>
<div class="c" style="left:38px;top:542px;width:89px">Camila Rogers</div>
<div class="c" style="left:128px;top:542px;width:89px">Controls Engineer</div>
<div class="c" style="left:218px;top:542px;width:89px">Engineering</div>
<div class="c" style="left:308px;top:542px;width:89px">Speciality Products</div>
<div class="c" style="left:398px;top:542px;width:89px">Female</div>
<div class="c" style="left:488px;top:542px;width:89px">Caucasian</div>
<div class="c r" style="left:578px;top:542px;width:89px">27</div>
<div class="c r dt" style="left:668px;top:542px;width:102px">10/21/2021</div>
<div class="c r sal" style="left:771px;top:542px;width:89px">$109,851</div>
<div class="c r" style="left:861px;top:542px;width:89px">0%</div>
<div class="c" style="left:951px;top:542px;width:89px">United States</div>
<div class="c" style="left:1041px;top:542px;width:89px">Seattle</div>
<div class="c" style="left:38px;top:566px;width:89px">Eli Jones</div>
<div class="c" style="left:128px;top:566px;width:89px">Manager</div>
<div class="c" style="left:218px;top:566px;width:89px">Human Resources</div>
<div class="c" style="left:308px;top:566px;width:89px">Manufacturing</div>
<div class="c" style="left:398px;top:566px;width:89px">Male</div>
<div class="c" style="left:488px;top:566px;width:89px">Caucasian</div>
<div class="c r" style="left:578px;top:566px;width:89px">59</div>
<div class="c r dt" style="left:668px;top:566px;width:102px">3/14/1999</div>
<div class="c r sal" style="left:771px;top:566px;width:89px">$105,086</div>
<div class="c r" style="left:861px;top:566px;width:89px">9%</div>
<div class="c" style="left:951px;top:566px;width:89px">United States</div>
<div class="c" style="left:1041px;top:566px;width:89px">Austin</div>
<div class="c" style="left:38px;top:590px;width:89px">Everleigh Ng</div>
<div class="c" style="left:128px;top:590px;width:89px">Sr. Manger</div>
<div class="c" style="left:218px;top:590px;width:89px">Finance</div>
<div class="c" style="left:308px;top:590px;width:89px">Research &amp; Development</div>
<div class="c" style="left:398px;top:590px;width:89px">Female</div>
<div class="c" style="left:488px;top:590px;width:89px">Asian</div>
<div class="c r" style="left:578px;top:590px;width:89px">51</div>
<div class="c r dt" style="left:668px;top:590px;width:102px">6/10/2021</div>
<div class="c r sal" style="left:771px;top:590px;width:89px">$146,742</div>
<div class="c r" style="left:861px;top:590px;width:89px">10%</div>
<div class="c" style="left:951px;top:590px;width:89px">China</div>
<div class="c" style="left:1041px;top:590px;width:89px">Shanghai</div>
<div class="c" style="left:38px;top:614px;width:89px">Robert Yang</div>
<div class="c" style="left:128px;top:614px;width:89px">Sr. Analyst</div>
<div class="c" style="left:218px;top:614px;width:89px">Accounting</div>
<div class="c" style="left:308px;top:614px;width:89px">Speciality Products</div>
<div class="c" style="left:398px;top:614px;width:89px">Male</div>
<div class="c" style="left:488px;top:614px;width:89px">Asian</div>
<div class="c r" style="left:578px;top:614px;width:89px">31</div>
<div class="c r dt" style="left:668px;top:614px;width:102px">11/4/2017</div>
<div class="c r sal" style="left:771px;top:614px;width:89px">$97,078</div>
<div class="c r" style="left:861px;top:614px;width:89px">0%</div>
<div class="c" style="left:951px;top:614px;width:89px">United States</div>
<div class="c" style="left:1041px;top:614px;width:89px">Austin</div>
<div class="c r dt" style="left:1131px;top:614px;width:102px">3/9/2020</div>
<div class="hb" style="left:127px"></div>
<div class="hb" style="left:217px"></div>
<div class="hb" style="left:307px"></div>
<div class="hb" style="left:397px"></div>
<div class="hb" style="left:487px"></div>
<div class="hb" style="left:577px"></div>
<div class="hb" style="left:667px"></div>
<div class="hb" style="left:770px"></div>
<div class="hb" style="left:860px"></div>
<div class="hb" style="left:950px"></div>
<div class="hb" style="left:1040px"></div>
<div class="hb" style="left:1130px"></div>
<div class="hb" style="left:1233px"></div>
<div class="hbb" style="top:277px"></div>
<div class="tbb" style="top:637px"></div>
<div class="selmark"></div>
</div>

<div class="abs" style="left:1673px;top:232px;width:4px;height:677px;background:#f5f6f8"></div><div class="abs" style="left:1673px;top:230px;width:1px;height:679px;background:#e1e3ea"></div>
<div id="vscroll"></div>
<div class="abs" style="left:1678px;top:272px;width:15px;height:49px;border-radius:7.5px;background:#d5d8e0"></div>
<div id="rpanel"></div>
<div id="sheetbar">
 <div class="abs" style="left:149px;top:-1px;width:180px;height:27px;background:#fff;border-left:1px solid #e6e8ec;border-right:1px solid #e6e8ec"></div>
 <div class="abs" style="left:999px;top:4px;width:657px;height:19px;background:#eceef3"></div>
 <div class="abs" style="left:1025px;top:6px;width:570px;height:15px;border-radius:7.5px;background:#d5d8e0"></div>
</div>
<div class="t" style="left:169.8px;top:919px;font-size:12.9px;color:#1fb574;font-weight:700;transform:scaleX(0.9954);transform-origin:0 0;">Employee Sample Data</div>
<div id="status">
 <div class="abs" style="left:1256px;top:1px;width:29px;height:30px;border-radius:3px;background:#dfe2e8"></div>
</div>
<div class="t" style="left:1412.5px;top:948px;font-size:12.2px;color:#2b303b;transform:scaleX(0.9945);transform-origin:0 0;">100%</div>
<svg id="botsvg" width="1750" height="970" style="left:0;top:0" fill="none" stroke="#3a3f4c" stroke-width="1.3" stroke-linecap="round" stroke-linejoin="round">
 <!-- vscroll -->
 <path d="M1679.3 236.6 H1690.8 M1679.3 239.5 H1690.8" stroke="#8a94b0" stroke-width="1.1" stroke-linecap="butt"/>
 <path d="M1681.7 260.2 H1688.5 L1685.1 256 Z" fill="#8a94b0" stroke="none"/>
 <path d="M1681.7 895.6 H1688.5 L1685.1 899.8 Z" fill="#8a94b0" stroke="none"/>
 <!-- right panel -->
 <path d="M1710 190.6 H1735 M1710 194.4 H1735" stroke="#d5d7dc" stroke-width="1.1" stroke-linecap="butt"/>
 <g stroke="#b3b5bb" stroke-width="1.1"><rect x="1713.7" y="221.7" width="2.7" height="2.7" rx="1.1"/><rect x="1718.8" y="221.7" width="11.5" height="2.7" rx="1.35"/><rect x="1713.7" y="226.7" width="2.7" height="11.6" rx="1.35"/><path d="M1728.8 228.4 V235.2 a1.4 1.4 0 0 1 -1.4 1.4 H1720.6 M1726 230.9 L1728.8 228.1 L1731.7 230.9 M1723.1 233.9 L1720.3 236.6 L1723.1 239.4" stroke-width="1.3"/></g>
 <path d="M1716.4 265.8 V283.2 L1720.8 279.4 L1723.8 284.6 L1726.6 283 L1723.7 277.9 L1729.8 276.6 Z" stroke-width="1.5" stroke="#2b303b"/>
 <g stroke="#a6a9b0" stroke-width="1.2"><circle cx="1715.1" cy="314.4" r="2.4"/><path d="M1717.7 314.4 H1731.8"/><circle cx="1726.4" cy="325.5" r="2.4"/><path d="M1712 325.5 H1723.8 M1729 325.5 H1731.8"/></g>
 <g stroke="#2b303b" stroke-width="1.4"><path d="M1715.86 366.77 A7.6 7.6 0 1 1 1718.42 370.7 M1712.6 364.4 L1714.8 367.7 L1718 366"/><path d="M1723 360.4 V365.2 H1726.6"/></g>
 <g stroke="#2b303b" stroke-width="1.3"><circle cx="1721.7" cy="410.4" r="9"/><path d="M1718.6 408 a3.2 3.2 0 1 1 4.6 2.9 c-1 0.6 -1.4 1.2 -1.4 2.4"/><circle cx="1721.8" cy="416" r="0.6" fill="#2b303b"/></g>
 <g stroke="#c0c4cc" stroke-width="1.3"><rect x="1713.3" y="905" width="7" height="7" rx="1.8"/><rect x="1723.5" y="905" width="7" height="7" rx="1.8"/><rect x="1713.3" y="915" width="7" height="7" rx="1.8"/><rect x="1723.5" y="915" width="7" height="7" rx="1.8"/></g>
 <!-- sheet nav -->
 <g stroke="#a3a7b0" stroke-width="1.2"><path d="M20.6 915 V929 M30.6 915.2 L23.6 922 L30.6 928.8 M60.4 915.2 L53.4 922 L60.4 928.8 M85.6 915.2 L92.6 922 L85.6 928.8 M115 915.2 L122 922 L115 928.8 M125.4 915 V929"/></g>
 <path d="M335.6 922.4 H350.6 M343.1 914.9 V929.9" stroke="#2b303b" stroke-width="1.3" stroke-linecap="butt"/>
 <!-- hscroll -->
 <path d="M989 916 V928 M992.6 916 V928 M1662.6 916 V928 M1666.2 916 V928" stroke="#9aa0ad" stroke-width="1" stroke-linecap="butt"/>
 <path d="M1014 918.4 V925.6 L1009.6 922 Z M1643.6 918.4 V925.6 L1648 922 Z" fill="#8a94b0" stroke="none"/>
 <!-- status left icon -->
 <g stroke="#2b303b" stroke-width="1.4"><circle cx="21" cy="948" r="4.4"/><circle cx="21" cy="948" r="1.6"/><path d="M27.8 945.8 H34.3 a1.1 1.1 0 0 1 1.1 1.1 V951.3 H33.2 M33.2 945.8 V960.4 a1.9 1.9 0 0 1 -1.9 1.9 H19 a1.3 1.3 0 0 1 -1.3 -1.3 V959.8 a1.3 1.3 0 0 1 1.3 -1.3 H30.9 V961.6 M20.4 954.4 V958.4"/></g>
 <path d="M0.5 944 V962" stroke="#e4e6ea" stroke-width="1" stroke-linecap="butt"/>
 <!-- status right icons -->
 <g stroke="#b9bcc3"><rect x="1147.2" y="945" width="12" height="13.8" rx="1"/></g>
 <g stroke="#75787f"><rect x="1144.4" y="947.6" width="12.4" height="14" rx="1" fill="#f5f6f8"/><path d="M1150 951.6 V955.6 H1153"/></g>
 <g stroke-width="1.4"><rect x="1178.4" y="944.6" width="7" height="16.6" rx="1.4"/><rect x="1172.8" y="949.6" width="18.4" height="6.6" rx="1.4"/></g>
 <path d="M1195.9 951.8 h6.2 l-3.1 3.4 Z" fill="#6b7290" stroke="none"/>
 <path d="M1217.4 944 V962 M1401.4 944 V962" stroke="#dcdee4" stroke-width="1" stroke-linecap="butt"/>
 <g stroke-width="1.4"><path d="M1239 947.6 V945.8 a1.3 1.3 0 0 1 1.3 -1.3 H1248.6 a1.3 1.3 0 0 1 1.3 1.3 V961 a1.3 1.3 0 0 1 -1.3 1.3 H1240.3 a1.3 1.3 0 0 1 -1.3 -1.3 V958.6 M1239 958.6 H1249.9 M1234.6 953 H1243.4 M1240.6 950.2 L1243.6 953 L1240.6 955.8"/></g>
 <g stroke="#2b303b" stroke-width="1.5" stroke-linejoin="miter"><rect x="1261.8" y="946.8" width="18.4" height="14.2"/><path d="M1261.8 951.5 H1280.2 M1261.8 956.3 H1280.2 M1266.4 946.8 V961 M1271 946.8 V961 M1275.6 946.8 V961"/></g>
 <g stroke="#2b303b"><rect x="1293.8" y="943.9" width="17.3" height="18.2" rx="1.2" stroke-width="1.3" fill="#c4c7cf"/><rect x="1296.6" y="946.4" width="11.8" height="13.2" rx="0.6" stroke-width="1.2" fill="#fff"/><path d="M1302.5 946.4 V959.6" stroke-width="1.3"/></g>
 <g stroke="#2b303b" stroke-width="1.4"><rect x="1325.9" y="944.9" width="18.2" height="16.2" rx="1"/><path d="M1325.9 954.6 H1338.4 V944.9 M1332 944.9 V954.6"/></g>
 <g stroke="#2b303b" stroke-width="1.4"><path d="M1356.6 954.8 C1360.4 946.6 1371.2 946.6 1375.2 954.8 C1371.2 963 1360.4 963 1356.6 954.8 Z"/><circle cx="1365.9" cy="954.7" r="3.1"/><path d="M1365.9 943.2 V945.8 M1356.8 946 L1358.8 947.6 M1375 946 L1373 947.6"/></g>
 <path d="M1380.1 952 h6.2 l-3.1 3.4 Z" fill="#6b7290" stroke="none"/><path d="M1449.6 951.8 h6.2 l-3.1 3.4 Z" fill="#6b7290" stroke="none"/>
 <path d="M1470.8 953.3 H1483.6 M1684.8 953.3 H1697 M1690.9 947.2 V959.4" stroke="#2b303b" stroke-width="2.2" stroke-linecap="butt"/>
 <path d="M1498.4 953.5 H1582" stroke="#3a3f4c" stroke-width="1.2" stroke-linecap="butt"/><path d="M1582 953.5 H1670" stroke="#c9ccd3" stroke-width="1.2" stroke-linecap="butt"/>
 <circle cx="1582.4" cy="953.5" r="7.2" fill="#f1f1f2" stroke="#3a3f4c" stroke-width="1.3"/>
 <g stroke="#2b303b" stroke-width="1.4"><path d="M1713.6 949.4 V945 H1718 M1713.8 945.2 L1718.6 950 M1730.4 949.4 V945 H1726 M1730.2 945.2 L1725.4 950 M1713.6 957 V961.4 H1718 M1713.8 961.2 L1718.6 956.4 M1730.4 957 V961.4 H1726 M1730.2 961.2 L1725.4 956.4"/></g>
</svg>

<div id="annot"></div>
</div>
</body></html>
